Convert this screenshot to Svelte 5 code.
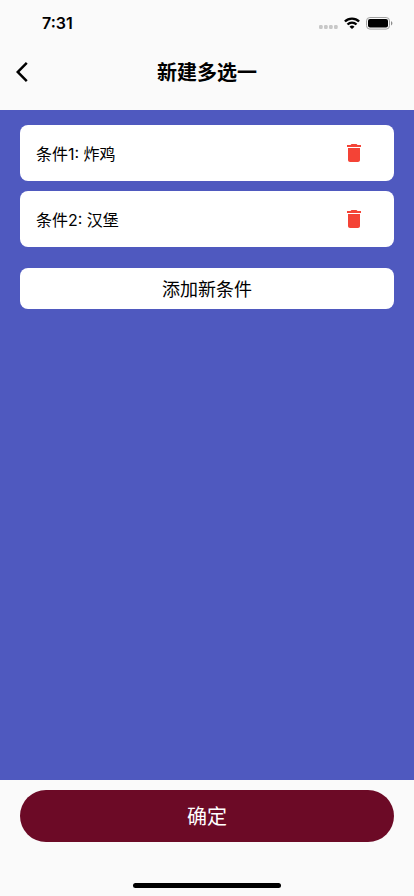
<script lang="ts">
  type Condition = { id: number; text: string };

  let conditions = $state<Condition[]>([
    { id: 1, text: "炸鸡" },
    { id: 2, text: "汉堡" },
  ]);
  let nextId = 3;

  function add() {
    conditions.push({ id: nextId++, text: "" });
  }

  function remove(id: number) {
    conditions = conditions.filter((c) => c.id !== id);
  }
</script>

<svelte:head>
  <title>新建多选一</title>
</svelte:head>

<div class="screen">
  <div class="status">
    <span class="time">7:31</span>
    <div class="indicators">
      <svg class="signal" width="19" height="4" viewBox="0 0 19 4" aria-hidden="true">
        <g fill="#c8c8c8">
          <rect x="0" y="0" width="3.7" height="4" rx="1.2" />
          <rect x="5" y="0" width="3.7" height="4" rx="1.2" />
          <rect x="10" y="0" width="3.7" height="4" rx="1.2" />
          <rect x="15" y="0" width="3.7" height="4" rx="1.2" />
        </g>
      </svg>
      <svg width="16" height="12" viewBox="0 0 16 12" aria-hidden="true">
        <g fill="none" stroke="#000" stroke-width="2.4">
          <path d="M.9 4.500a10.200 10.200 0 0 1 14.200 0" />
          <path d="M3.500 7.500a6.400 6.400 0 0 1 9 0" />
        </g>
        <path d="M8 12L5.500 9.700a3.500 3.500 0 0 1 5 0z" />
      </svg>
      <svg width="27" height="13" viewBox="0 0 27 13" aria-hidden="true">
        <rect x="0.5" y="0.5" width="23" height="11.6" rx="3.4" fill="none" stroke="#a0a0a0" />
        <rect x="2" y="2" width="20" height="8.6" rx="2" />
        <path d="M25 4.200c.9.4 1.400 1.100 1.400 2.100S25.900 8 25 8.400z" fill="#8c8c8c" />
      </svg>
    </div>
  </div>

  <header>
    <button class="back" aria-label="返回">
      <svg width="24" height="24" viewBox="0 0 24 24" aria-hidden="true">
        <path d="M11.67 3.87L9.9 2.1 0 12l9.9 9.9 1.77-1.77L3.54 12z" />
      </svg>
    </button>
    <h1>新建多选一</h1>
  </header>

  <main>
    <ul>
      {#each conditions as c, i (c.id)}
        <li>
          <span class="label">条件{i + 1}: {c.text}</span>
          <button class="del" aria-label="删除条件{i + 1}" onclick={() => remove(c.id)}>
            <svg width="24" height="24" viewBox="0 0 24 24" aria-hidden="true">
              <path
                d="M6 19c0 1.100.9 2 2 2h8c1.100 0 2-.9 2-2V7H6v12zM19 4h-3.500l-1-1h-5l-1 1H5v2h14V4z"
              />
            </svg>
          </button>
        </li>
      {/each}
    </ul>
    <button class="add" onclick={add}>添加新条件</button>
  </main>

  <footer>
    <button class="confirm">确定</button>
    <div class="home"></div>
  </footer>
</div>

<style>
  :global(body) {
    margin: 0;
    background: #fafafa;
  }

  .screen {
    min-height: 100vh;
    display: flex;
    flex-direction: column;
    background: #fafafa;
    color: #000;
    font-family: Inter, "Noto Sans CJK SC", sans-serif;
  }

  button {
    border: none;
    padding: 0;
    font-family: inherit;
    cursor: pointer;
  }

  svg {
    display: block;
  }

  .status {
    display: flex;
    align-items: center;
    justify-content: space-between;
    height: 46px;
    padding: 0 21px 0 42px;
  }

  .time {
    font-size: 16px;
    line-height: 20px;
    font-weight: 600;
  }

  .indicators {
    display: flex;
    align-items: center;
    gap: 6px;
  }

  .signal {
    margin-top: 8px;
  }

  header {
    display: grid;
    grid-template-columns: 40px 1fr 40px;
    align-items: center;
    height: 52px;
    padding: 0 4px 12px;
  }

  .back {
    height: 40px;
    padding-left: 12px;
    background: none;
  }

  h1 {
    margin: 0;
    padding-top: 2px;
    text-align: center;
    font-size: 20px;
    line-height: 28px;
    font-weight: 600;
  }

  main {
    flex: 1;
    padding: 15px 20px;
    background: #4f59bf;
  }

  ul {
    display: flex;
    flex-direction: column;
    gap: 10px;
    margin: 0 0 21px;
    padding: 0;
    list-style: none;
  }

  li {
    display: flex;
    align-items: center;
    justify-content: space-between;
    height: 56px;
    padding: 0 16px;
    border-radius: 8px;
    background: #fff;
    font-size: 16px;
    line-height: 24px;
  }

  .label {
    padding-top: 2px;
  }

  .del {
    display: grid;
    place-items: center;
    width: 48px;
    height: 48px;
    background: none;
  }

  .del svg {
    fill: #f44336;
  }

  .add,
  .confirm {
    display: block;
    width: 100%;
    padding-top: 2px;
  }

  .add {
    height: 41px;
    border-radius: 8px;
    background: #fff;
    color: #000;
    font-size: 18px;
    line-height: 26px;
  }

  footer {
    display: flex;
    flex-direction: column;
    align-items: center;
    padding: 10px 20px 8px;
  }

  .confirm {
    height: 52px;
    border-radius: 26px;
    background: #6c0a26;
    color: #fff;
    font-size: 20px;
    line-height: 28px;
  }

  .home {
    width: 148px;
    height: 5px;
    margin-top: 41px;
    border-radius: 3px;
    background: #000;
  }
</style>
